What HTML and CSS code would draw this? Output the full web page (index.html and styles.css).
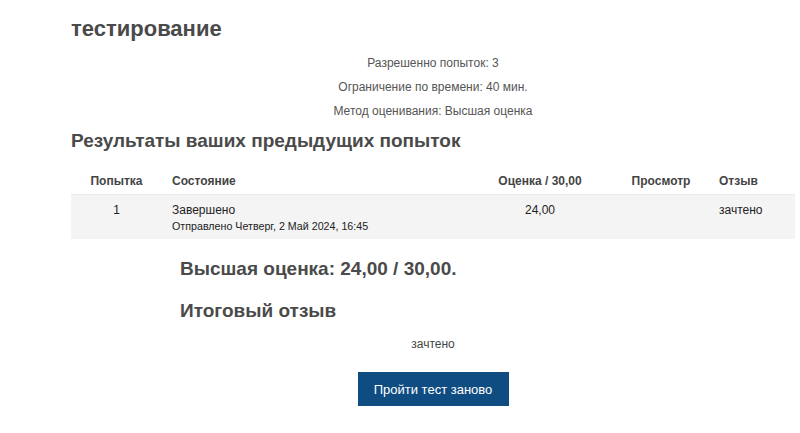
FILE: index.html
```html
<!DOCTYPE html>
<html lang="ru">
<head>
<meta charset="utf-8">
<link rel="stylesheet" href="styles.css">
</head>
<body>
<div class="page">
  <h2 class="title">тестирование</h2>
  <div class="info">
    <p>Разрешенно попыток: 3</p>
    <p>Ограничение по времени: 40 мин.</p>
    <p>Метод оценивания: Высшая оценка</p>
  </div>
  <h3 class="section">Результаты ваших предыдущих попыток</h3>
  <table class="attempts">
    <colgroup>
      <col class="w-num"><col class="w-state"><col class="w-grade"><col class="w-review"><col class="w-fb">
    </colgroup>
    <thead>
      <tr>
        <th class="c-num">Попытка</th>
        <th class="c-state">Состояние</th>
        <th class="c-grade">Оценка / 30,00</th>
        <th class="c-review">Просмотр</th>
        <th class="c-fb">Отзыв</th>
      </tr>
    </thead>
    <tbody>
      <tr>
        <td class="c-num">1</td>
        <td class="c-state">Завершено<span class="sub">Отправлено Четверг, 2 Май 2024, 16:45</span></td>
        <td class="c-grade">24,00</td>
        <td class="c-review"></td>
        <td class="c-fb">зачтено</td>
      </tr>
    </tbody>
  </table>
  <div class="summary">
    <h3 class="best">Высшая оценка: 24,00 / 30,00.</h3>
    <h3 class="fbtitle">Итоговый отзыв</h3>
  </div>
  <p class="fbtext">зачтено</p>
  <div class="actions"><button class="btn">Пройти тест заново</button></div>
</div>
</body>
</html>
```
FILE: styles.css
```css
html, body { margin: 0; padding: 0; background: #fff; }
body { font-family: "Liberation Sans", Arial, sans-serif; color: #333; }
.page { width: 724px; margin-left: 71px; padding-top: 14px; }
.title { margin: 0; font-size: 22px; font-weight: bold; color: #4a4a4a; line-height: 30px; }
.info { text-align: center; font-size: 12px; color: #555; margin-top: 7px; }
.info p { margin: 0; line-height: 24px; }
.section { margin: 4px 0 0; font-size: 19px; font-weight: bold; color: #4a4a4a; line-height: 28px; }
.attempts { width: 100%; table-layout: fixed; border-collapse: collapse; margin-top: 12px; font-size: 12px; color: #222; }
.w-num { width: 91px; }
.w-state { width: 305px; }
.w-grade { width: 146px; }
.w-review { width: 96px; }
.w-fb { width: 86px; }
.attempts th { font-weight: bold; color: #444; font-size: 12px; height: 27px; padding: 0 10px; border-bottom: 1px solid #e8e8e8; text-align: left; }
.attempts td { vertical-align: top; padding: 8px 10px 7px; background: #f4f4f4; height: 29px; }
.attempts .c-num, .attempts .c-grade, .attempts .c-review { text-align: center; }
.sub { display: block; font-size: 10.7px; margin-top: 3px; }
.summary { padding-left: 109px; }
.best { margin: 17px 0 0; font-size: 19px; font-weight: bold; color: #4a4a4a; line-height: 26px; }
.fbtitle { margin: 16px 0 0; font-size: 19px; font-weight: bold; color: #4a4a4a; line-height: 26px; }
.fbtext { margin: 13px 0 0; font-size: 12px; color: #444; text-align: center; }
.actions { display: flex; justify-content: center; margin-top: 21px; }
.btn { background: #0f4c81; color: #fff; border: none; font-family: "Liberation Sans", Arial, sans-serif; font-size: 13px; height: 34px; width: 151px; padding: 0; }
```
